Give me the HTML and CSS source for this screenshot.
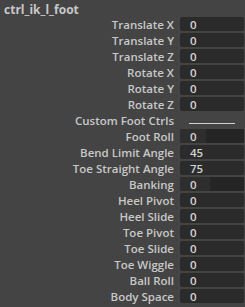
FILE: index.html
```html
<!DOCTYPE html>
<html>
	<head>
		<meta charset="utf-8" />
		<title>ctrl_ik_l_foot</title>
		<link rel="stylesheet" href="styles.css">
	</head>
	<body>
		<div class="title">ctrl_ik_l_foot</div>
		<div class="attrs">
			<div class="row"><span class="label">Translate X</span><span class="field">0</span></div>
			<div class="row"><span class="label">Translate Y</span><span class="field">0</span></div>
			<div class="row"><span class="label">Translate Z</span><span class="field">0</span></div>
			<div class="row"><span class="label">Rotate X</span><span class="field">0</span></div>
			<div class="row"><span class="label">Rotate Y</span><span class="field">0</span></div>
			<div class="row"><span class="label">Rotate Z</span><span class="field">0</span></div>
			<div class="row"><span class="label">Custom Foot Ctrls</span><span class="sep"></span></div>
			<div class="row"><span class="label">Foot Roll</span><span class="field slider"><span class="fill">0</span></span></div>
			<div class="row"><span class="label">Bend Limit Angle</span><span class="field">45</span></div>
			<div class="row"><span class="label">Toe Straight Angle</span><span class="field">75</span></div>
			<div class="row"><span class="label">Banking</span><span class="field slider"><span class="fill wide">0</span></span></div>
			<div class="row"><span class="label">Heel Pivot</span><span class="field">0</span></div>
			<div class="row"><span class="label">Heel Slide</span><span class="field">0</span></div>
			<div class="row"><span class="label">Toe Pivot</span><span class="field">0</span></div>
			<div class="row"><span class="label">Toe Slide</span><span class="field">0</span></div>
			<div class="row"><span class="label">Toe Wiggle</span><span class="field">0</span></div>
			<div class="row"><span class="label">Ball Roll</span><span class="field">0</span></div>
			<div class="row"><span class="label">Body Space</span><span class="field">0</span></div>
		</div>
	</body>
</html>
```

FILE: styles.css
```css
*{
	padding: 0px;
	margin: 0px;
	box-sizing: border-box;
}
body{
	background-color: #444444;
	font-family: "Open Sans", "DejaVu Sans", sans-serif;
	color: #c8c8c8;
	width: 245px;
	height: 307px;
	overflow: hidden;
}
.title{
	height: 16px;
	padding-left: 4px;
	font-size: 12px;
	font-weight: 700;
	line-height: 20px;
}
.row{
	display: flex;
	height: 16px;
	align-items: center;
}
.label{
	width: 174px;
	text-align: right;
	font-size: 11.5px;
	font-weight: 600;
	line-height: 16px;
	padding-top: 2px;
	white-space: nowrap;
}
.field{
	display: flex;
	margin-left: 6px;
	width: 64px;
	height: 14px;
	background-color: #2b2b2b;
	border-radius: 2px;
	font-size: 11.5px;
	font-weight: 600;
	line-height: 15px;
	padding-left: 10px;
	color: #d2d2d2;
}
.slider{
	background-color: #252525;
	padding-left: 0px;
}
.fill{
	width: 26px;
	padding-left: 10px;
	background-color: #2e2e2e;
	border-radius: 2px 0 0 2px;
}
.fill.wide{
	width: 30px;
}
.sep{
	margin-left: 15px;
	width: 46px;
	height: 1px;
	margin-top: 6px;
	background-color: #d0d0d0;
}
```
